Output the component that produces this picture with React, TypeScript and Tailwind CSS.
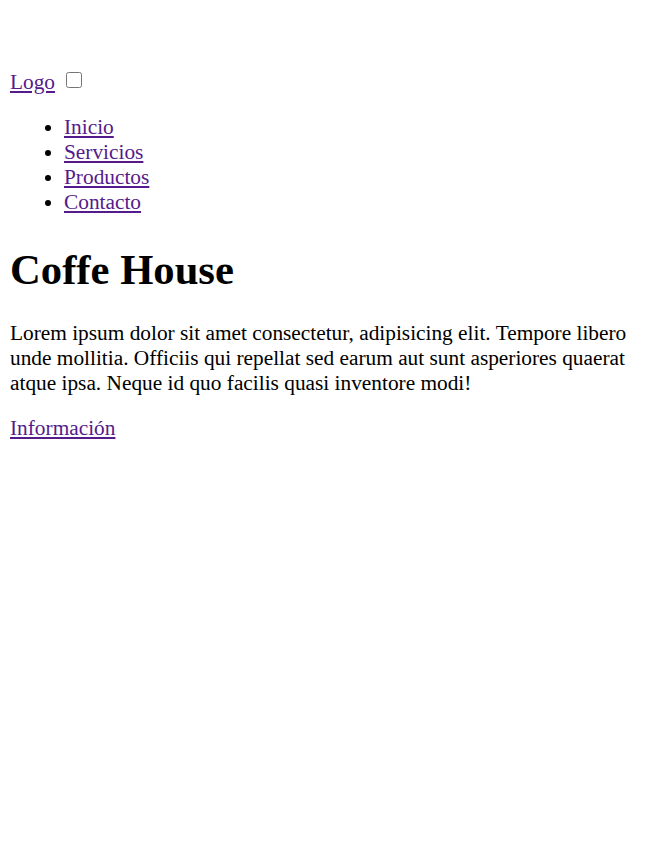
import React from 'react'

const links = ['Inicio', 'Servicios', 'Productos', 'Contacto']

export default function App() {
  return (
    <div className="min-h-[850px] bg-white px-[10px] text-[21.33px] leading-[normal] text-black font-['Liberation_Serif','Times_New_Roman',serif]">
      {/* header */}
      <header className="pt-[70px]">
        <div className="flex items-center gap-[11px]">
          <a href="#" className="text-[#551a8b] underline">Logo</a>
          <input type="checkbox" className="w-[16px] h-[16px] mt-[-6px]" />
        </div>
        <nav>
          <ul className="list-disc pl-[54px] mt-[20px]">
            {links.map((l) => (
              <li key={l}>
                <a href="#" className="text-[#551a8b] underline">{l}</a>
              </li>
            ))}
          </ul>
        </nav>
      </header>

      {/* hero */}
      <main>
        <h1 className="text-[42.67px] leading-[normal] font-bold mt-[30px]">Coffe House</h1>
        <p className="mt-[27px]">
          Lorem ipsum dolor sit amet consectetur, adipisicing elit. Tempore libero unde mollitia. Officiis qui repellat sed earum aut sunt asperiores quaerat atque ipsa. Neque id quo facilis quasi inventore modi!
        </p>
        <p className="mt-[20px]">
          <a href="#" className="text-[#551a8b] underline">Información</a>
        </p>
      </main>
    </div>
  )
}
